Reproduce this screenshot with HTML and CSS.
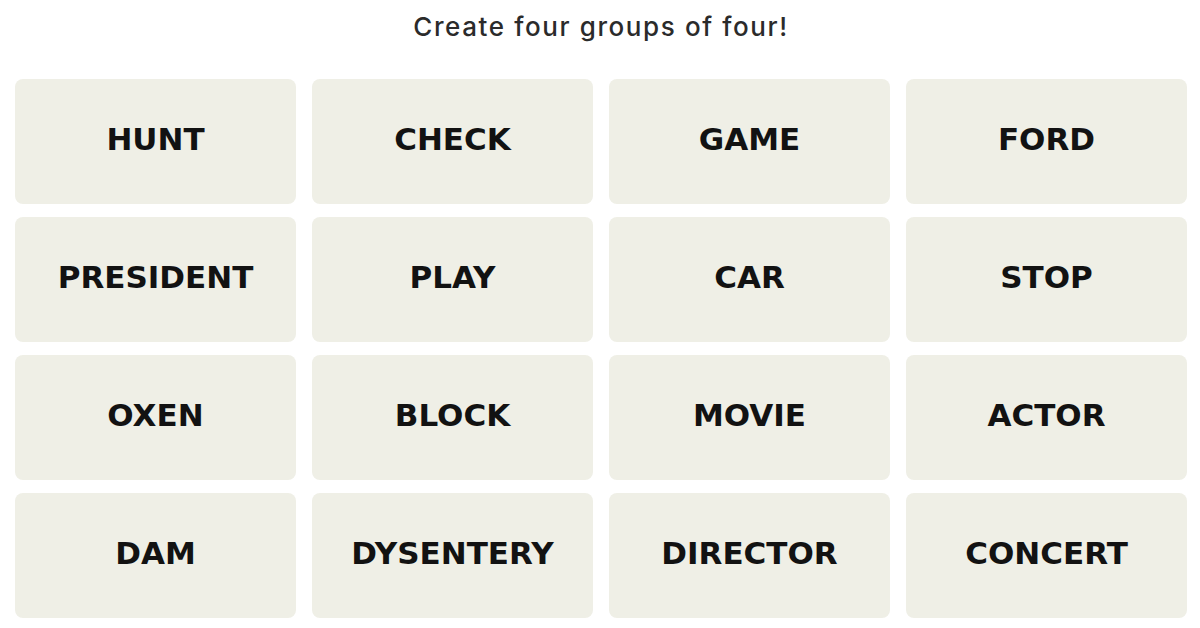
FILE: index.html
```html
<!DOCTYPE html>
<html lang="en">
<head>
    <meta charset="UTF-8">
    <meta name="viewport" content="width=device-width, initial-scale=1.0">
    <title>Connections</title>
    <link rel="stylesheet" href="styles.css">
</head>
<body>

<main class="game">
    <p class="prompt">Create four groups of four!</p>

    <div class="board">
        <button class="tile">HUNT</button>
        <button class="tile">CHECK</button>
        <button class="tile">GAME</button>
        <button class="tile">FORD</button>

        <button class="tile">PRESIDENT</button>
        <button class="tile">PLAY</button>
        <button class="tile">CAR</button>
        <button class="tile">STOP</button>

        <button class="tile">OXEN</button>
        <button class="tile">BLOCK</button>
        <button class="tile">MOVIE</button>
        <button class="tile">ACTOR</button>

        <button class="tile">DAM</button>
        <button class="tile">DYSENTERY</button>
        <button class="tile">DIRECTOR</button>
        <button class="tile">CONCERT</button>
    </div>
</main>

</body>
</html>
```

FILE: styles.css
```css
:root {
    --tile-color: #efefe6;
    --text-color: #121212;
    --prompt-color: #2b2b2b;
}

* {
    margin: 0;
    padding: 0;
    box-sizing: border-box;
}

body {
    font-family: 'DejaVu Sans', 'Liberation Sans', sans-serif;
    background-color: white;
    color: var(--text-color);
}

.game {
    width: 1172px;
    margin-left: 15px;
}

.prompt {
    text-align: center;
    font-family: Inter, 'DejaVu Sans', sans-serif;
    font-size: 26px;
    font-weight: 500;
    letter-spacing: 1.6px;
    line-height: 30px;
    padding-top: 12px;
    color: var(--prompt-color);
}

.board {
    display: grid;
    grid-template-columns: repeat(4, 1fr);
    grid-auto-rows: 125px;
    column-gap: 16px;
    row-gap: 13px;
    margin-top: 37px;
}

.tile {
    border: none;
    border-radius: 8px;
    padding-bottom: 5px;
    background-color: var(--tile-color);
    font-family: inherit;
    font-size: 31px;
    font-weight: bold;
    color: var(--text-color);
    cursor: pointer;
}
```
